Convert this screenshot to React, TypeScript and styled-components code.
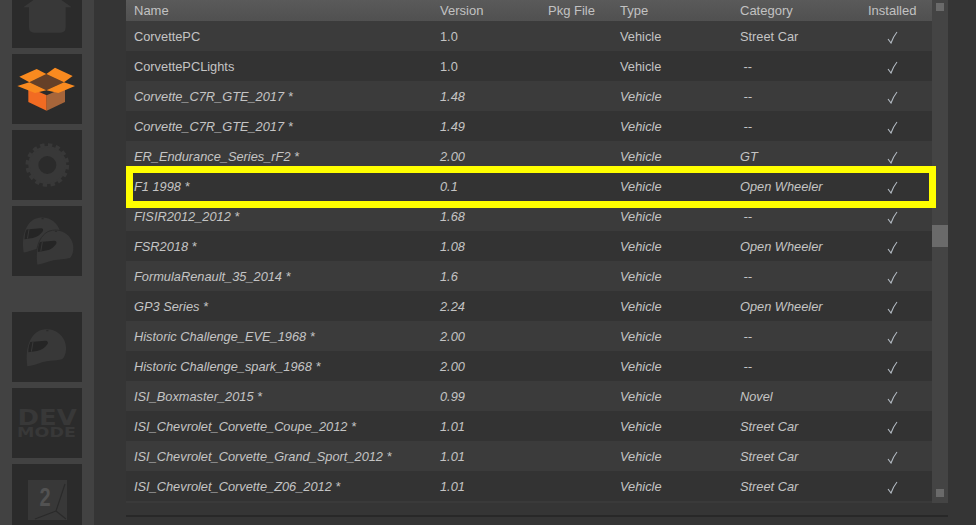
import React from "react";
import styled, { createGlobalStyle } from "styled-components";

const GlobalStyle = createGlobalStyle`
  html, body {
    margin: 0;
    padding: 0;
    background: #353535;
    overflow: hidden;
  }
`;

interface Mod {
  name: string;
  version: string;
  category: string;
  italic?: boolean;
  selected?: boolean;
}

const mods: Mod[] = [
  { name: "CorvettePC", version: "1.0", category: "Street Car" },
  { name: "CorvettePCLights", version: "1.0", category: " --" },
  { name: "Corvette_C7R_GTE_2017 *", version: "1.48", category: " --", italic: true },
  { name: "Corvette_C7R_GTE_2017 *", version: "1.49", category: " --", italic: true },
  { name: "ER_Endurance_Series_rF2 *", version: "2.00", category: "GT", italic: true },
  { name: "F1 1998 *", version: "0.1", category: "Open Wheeler", italic: true, selected: true },
  { name: "FISIR2012_2012 *", version: "1.68", category: " --", italic: true },
  { name: "FSR2018 *", version: "1.08", category: "Open Wheeler", italic: true },
  { name: "FormulaRenault_35_2014 *", version: "1.6", category: " --", italic: true },
  { name: "GP3 Series *", version: "2.24", category: "Open Wheeler", italic: true },
  { name: "Historic Challenge_EVE_1968 *", version: "2.00", category: " --", italic: true },
  { name: "Historic Challenge_spark_1968 *", version: "2.00", category: " --", italic: true },
  { name: "ISI_Boxmaster_2015 *", version: "0.99", category: "Novel", italic: true },
  { name: "ISI_Chevrolet_Corvette_Coupe_2012 *", version: "1.01", category: "Street Car", italic: true },
  { name: "ISI_Chevrolet_Corvette_Grand_Sport_2012 *", version: "1.01", category: "Street Car", italic: true },
  { name: "ISI_Chevrolet_Corvette_Z06_2012 *", version: "1.01", category: "Street Car", italic: true },
];

const helmetPath =
  "M82 229 C80 215 79 200 81 185 C84 160 95 135 115 124 C135 114 160 117 176 130 C192 143 200 162 198 180 C197 192 193 203 186 208 C165 213 140 212 122 218 C108 223 95 227 82 229 Z";
const visorPath = "M91 156 L136 152 C143 152 146 157 142 163 C136 172 125 181 111 183 L85 187 C85 175 87 165 91 156 Z";

const Helmet = ({ x = 0, y = 0, s = 1, edge = false }: { x?: number; y?: number; s?: number; edge?: boolean }) => (
  <g transform={`translate(${x} ${y}) scale(${s})`}>
    <path d={helmetPath} fill="#383838" stroke={edge ? "#2b2b2b" : "none"} strokeWidth={edge ? 3 : 0} />
    <path d={visorPath} fill="#252525" />
    <path d="M99 156 L94 185" stroke="#383838" strokeWidth={3} />
    <ellipse cx={142} cy={122} rx={4} ry={2} fill="#2b2b2b" />
  </g>
);

const App: React.FC = () => {
  return (
    <Page>
      <GlobalStyle />
      <Sidebar>
        <TopGroup>
          <Tile>
            <svg width="70" height="70" viewBox="36 -66 210 210">
              <path
                d="M142 -30 L215 22 L197 22 L197 82 Q197 98 181 98 L103 98 Q87 98 87 82 L87 22 L70 22 Z"
                fill="#383838"
              />
            </svg>
          </Tile>
          <Tile>
            <svg width="70" height="70" viewBox="36 162 210 210">
              <path d="M85 262 L140 286 L140 332 L85 306 Z" fill="#f26b22" />
              <path d="M140 286 L195 262 L195 306 L140 332 Z" fill="#a6653a" />
              <path d="M88 247 L139 222 L192 247 L139 271 Z" fill="#654028" />
              <path d="M58 230 L110 207 L139 222 L88 247 Z" fill="#f98a1f" />
              <path d="M139 222 L165 203 L218 228 L192 247 Z" fill="#f98a1f" />
              <path d="M52 258 L88 247 L139 271 L105 279 Z" fill="#f98a1f" />
              <path d="M139 271 L192 247 L225 258 L175 279 Z" fill="#f98a1f" />
            </svg>
          </Tile>
          <Tile>
            <svg width="70" height="70" viewBox="36 390 210 210">
              <circle cx="142" cy="495" r="42" fill="none" stroke="#383838" strokeWidth="30" />
              <circle
                cx="142"
                cy="495"
                r="59"
                fill="none"
                stroke="#383838"
                strokeWidth="13"
                strokeDasharray="13 10.17"
              />
            </svg>
          </Tile>
          <Tile>
            <svg width="70" height="70" viewBox="36 618 210 210">
              <Helmet x={-7} y={540} s={0.95} />
              <Helmet x={33} y={578} s={0.95} edge />
            </svg>
          </Tile>
        </TopGroup>
        <BottomGroup>
          <Tile>
            <svg width="70" height="70" viewBox="36 66 210 210">
              <Helmet />
            </svg>
          </Tile>
          <Tile>
            <DevMode>
              <DevWord>DEV</DevWord>
              <ModeWord>MODE</ModeWord>
            </DevMode>
          </Tile>
          <Tile>
            <Badge>
              <BadgeNumber>2</BadgeNumber>
              <svg width="39" height="40" viewBox="0 0 39 40">
                <path d="M28 31 L37 4 M28 31 L7 39 M28 31 L38 39" stroke="#2a2a2a" strokeWidth="1.2" fill="none" />
              </svg>
            </Badge>
          </Tile>
        </BottomGroup>
      </Sidebar>
      <Main>
        <Panel>
          <Table>
            <HeaderRow>
              <span>Name</span>
              <span>Version</span>
              <span>Pkg File</span>
              <span>Type</span>
              <span>Category</span>
              <span>Installed</span>
            </HeaderRow>
            {mods.map((mod, i) => (
              <Row key={i} $alt={i % 2 === 1} $italic={!!mod.italic} $selected={!!mod.selected}>
                <span>{mod.name}</span>
                <span>{mod.version}</span>
                <span />
                <span>Vehicle</span>
                <CategoryCell>{mod.category}</CategoryCell>
                <CheckCell>
                  <svg width="11" height="13" viewBox="0 0 11 13">
                    <path d="M1 8 L4 12 Q6 6 10 1" fill="none" stroke="#b4bcc4" strokeWidth="1.1" />
                  </svg>
                </CheckCell>
              </Row>
            ))}
          </Table>
          <ScrollTrack>
            <ScrollButton />
            <ScrollThumb />
            <ScrollButton />
          </ScrollTrack>
        </Panel>
        <FooterLine />
      </Main>
    </Page>
  );
};

const Page = styled.div`
  display: flex;
  width: 976px;
  height: 525px;
  overflow: hidden;
  background: #353535;
  font-family: "Liberation Sans", Arial, sans-serif;
  font-size: 12.8px;
  color: #c4c4c4;
`;

const Sidebar = styled.div`
  flex: none;
  width: 94px;
  height: 525px;
  box-sizing: border-box;
  padding-left: 12px;
  background: #424242;
  overflow: hidden;
`;

const TopGroup = styled.div`
  display: flex;
  flex-direction: column;
  gap: 6px;
  margin-top: -22px;
`;

const BottomGroup = styled.div`
  display: flex;
  flex-direction: column;
  gap: 6px;
  margin-top: 36px;
`;

const Tile = styled.div`
  flex: none;
  display: flex;
  align-items: center;
  justify-content: center;
  width: 70px;
  height: 70px;
  background: #2b2b2b;
`;

const DevMode = styled.div`
  display: flex;
  flex-direction: column;
  align-items: center;
  color: #383838;
  font-family: "DejaVu Sans", sans-serif;
  font-weight: bold;
  margin-top: 1px;
`;

const DevWord = styled.div`
  font-size: 22px;
  line-height: 17px;
  transform: scaleX(1.18);
`;

const ModeWord = styled.div`
  font-size: 14px;
  line-height: 13px;
  transform: scaleX(1.25);
`;

const Badge = styled.div`
  position: relative;
  width: 39px;
  height: 40px;
  background: #383838;
  margin-top: 1px;
`;

const BadgeNumber = styled.div`
  position: absolute;
  left: 10px;
  top: 4px;
  font-size: 25px;
  font-weight: bold;
  line-height: 26px;
  color: #525252;
  transform: scaleX(0.8);
`;

const Main = styled.div`
  flex: none;
  width: 854px;
  box-sizing: border-box;
  padding-left: 32px;
`;

const Panel = styled.div`
  display: flex;
  height: 503px;
`;

const Table = styled.div`
  width: 806px;
  background: #3a3a3a;
`;

const columns = "306px 108px 72px 120px 128px 48px";

const HeaderRow = styled.div`
  display: grid;
  grid-template-columns: ${columns};
  align-items: center;
  height: 21px;
  padding-left: 8px;
  background: linear-gradient(#5a5a5a, #505050);
  color: #c2c2c2;
  font-size: 13px;
  white-space: nowrap;
`;

const Row = styled.div<{ $alt: boolean; $italic: boolean; $selected: boolean }>`
  position: relative;
  display: grid;
  grid-template-columns: ${columns};
  align-items: center;
  height: 30px;
  box-sizing: border-box;
  padding: 1px 0 0 8px;
  background: ${(p) => (p.$alt ? "#333333" : "#3b3b3b")};
  font-style: ${(p) => (p.$italic ? "italic" : "normal")};
  white-space: nowrap;

  ${(p) =>
    p.$selected &&
    `
    z-index: 1;

    &::after {
      content: "";
      position: absolute;
      top: -5px;
      left: 0;
      right: -4px;
      bottom: -7px;
      border: 7px solid #ffff00;
    }
  `}
`;

const CategoryCell = styled.span`
  white-space: pre;
`;

const CheckCell = styled.span`
  display: flex;
  justify-content: center;
  padding-top: 1px;
`;

const ScrollTrack = styled.div`
  display: flex;
  flex-direction: column;
  width: 16px;
  height: 503px;
  box-sizing: border-box;
  padding: 3px 0 6px;
  background: #444444;
`;

const ScrollButton = styled.div`
  flex: none;
  width: 8px;
  height: 8px;
  margin-left: 4px;
  background: #6a6a6a;
`;

const ScrollThumb = styled.div`
  flex: none;
  height: 22px;
  margin-top: 214px;
  margin-bottom: 242px;
  background: #6a6a6a;
`;

const FooterLine = styled.div`
  width: 822px;
  height: 2px;
  margin-top: 12px;
  background: #282828;
`;

export default App;
